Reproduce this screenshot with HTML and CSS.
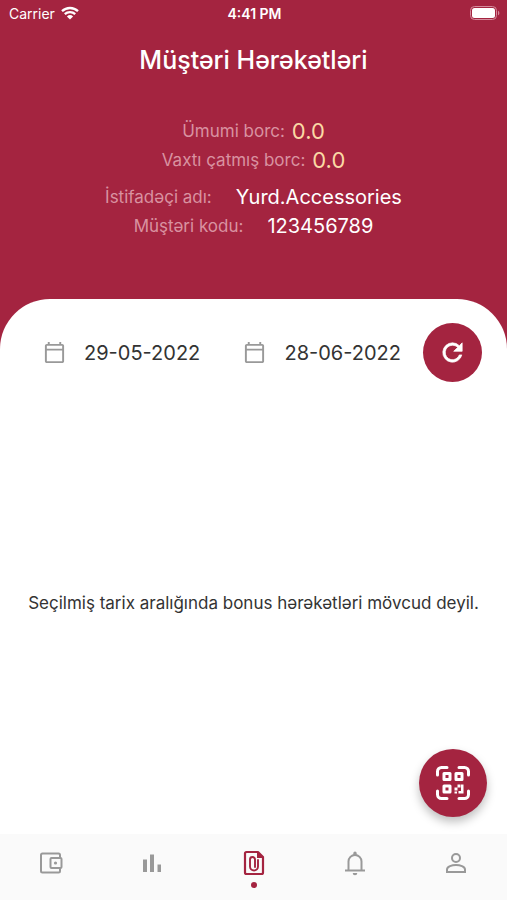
FILE: index.html
```
<!DOCTYPE html>
<html lang="az">
  <head>
    <meta charset="UTF-8"/>
    <meta name="viewport" content="width=device-width, initial-scale=1"/>
    <title>Müştəri Hərəkətləri</title>
    <link rel="stylesheet" href="styles.css">
  </head>
  <body>
    <div class="app">
      <div class="statusbar">
        <div class="carrier">
          <span>Carrier</span>
          <svg class="wifi" viewBox="0 0 18 14" aria-hidden="true">
            <path d="M1 5.2a11.6 11.6 0 0 1 16 0M3.8 8.2a7.5 7.5 0 0 1 10.4 0" fill="none" stroke="currentColor" stroke-width="2.3"/>
            <path d="M9 13.5 5.9 10.4a4.5 4.5 0 0 1 6.2 0z" fill="currentColor"/>
          </svg>
        </div>
        <div class="clock">4:41 PM</div>
        <svg class="battery" viewBox="0 0 30 14" aria-hidden="true">
          <rect x=".5" y=".5" width="26" height="13" rx="4" fill="none" stroke="#d58a9c"/>
          <rect x="2" y="2" width="23" height="10" rx="2.5" fill="#fff"/>
          <path d="M28 4.7c1.8.7 1.8 3.9 0 4.6z" fill="#d58a9c"/>
        </svg>
      </div>

      <header class="header">
        <h1>Müştəri Hərəkətləri</h1>
        <dl class="debts">
          <div class="row"><dt>Ümumi borc:</dt><dd>0.0</dd></div>
          <div class="row"><dt>Vaxtı çatmış borc:</dt><dd>0.0</dd></div>
        </dl>
        <dl class="account">
          <div class="row"><dt>İstifadəçi adı:</dt><dd>Yurd.Accessories</dd></div>
          <div class="row"><dt>Müştəri kodu:</dt><dd>123456789</dd></div>
        </dl>
      </header>

      <main class="sheet">
        <div class="filters">
          <button type="button" class="date">
            <svg viewBox="0 0 24 24" aria-hidden="true"><path fill="currentColor" d="M20 3h-1V1h-2v2H7V1H5v2H4c-1.100 0-2 .9-2 2v16c0 1.100.9 2 2 2h16c1.100 0 2-.9 2-2V5c0-1.100-.9-2-2-2zm0 18H4V10h16zm0-13H4V5h16z"/></svg>
            <span>29-05-2022</span>
          </button>
          <button type="button" class="date">
            <svg viewBox="0 0 24 24" aria-hidden="true"><path fill="currentColor" d="M20 3h-1V1h-2v2H7V1H5v2H4c-1.100 0-2 .9-2 2v16c0 1.100.9 2 2 2h16c1.100 0 2-.9 2-2V5c0-1.100-.9-2-2-2zm0 18H4V10h16zm0-13H4V5h16z"/></svg>
            <span>28-06-2022</span>
          </button>
          <button type="button" class="refresh" aria-label="Yenilə">
            <svg viewBox="0 0 24 24" aria-hidden="true"><path fill="currentColor" stroke="currentColor" stroke-width=".6" d="M17.650 6.350A7.960 7.960 0 0 0 12 4a8 8 0 1 0 7.730 10h-2.080A6 6 0 1 1 12 6c1.660 0 3.140.690 4.220 1.780L13 11h7V4z"/></svg>
          </button>
        </div>

        <p class="empty">Seçilmiş tarix aralığında bonus hərəkətləri mövcud deyil.</p>

        <button type="button" class="scan" aria-label="QR kod">
          <svg viewBox="0 0 36 36" aria-hidden="true">
            <g fill="none" stroke="currentColor" stroke-width="3" stroke-linecap="round">
              <path d="M2.500 10V6.500a4 4 0 0 1 4-4H12M24 2.500h5.500a4 4 0 0 1 4 4V10M33.500 26v3.500a4 4 0 0 1-4 4H24M12 33.500H6.500a4 4 0 0 1-4-4V26"/>
              <g stroke-linejoin="round">
                <rect x="9" y="8.500" width="6" height="6"/>
                <rect x="21" y="8.500" width="6" height="6"/>
                <rect x="9" y="21" width="6" height="6"/>
              </g>
            </g>
            <path fill="currentColor" d="M19.500 22.500h3v-3h3v3h-3v3h-3zM26 19.500h2.500v9h-5V26H26zM19.500 26.500h2.500v2h-2.500z"/>
          </svg>
        </button>
      </main>

      <nav class="tabs">
        <a href="#wallet" aria-label="Balans">
          <svg viewBox="0 0 24 24" aria-hidden="true" fill="none" stroke="currentColor" stroke-width="2" stroke-linejoin="round">
            <path d="M21 7V4a1.500 1.500 0 0 0-1.500-1.500h-16A1.500 1.500 0 0 0 2 4v16a1.500 1.500 0 0 0 1.500 1.500h16A1.500 1.500 0 0 0 21 20v-3"/>
            <rect x="11.500" y="7" width="11" height="10" rx="1"/>
            <circle cx="16.500" cy="12" r="1.600" fill="currentColor" stroke="none"/>
          </svg>
        </a>
        <a href="#stats" aria-label="Statistika">
          <svg viewBox="0 0 24 24" aria-hidden="true"><path fill="currentColor" d="M3 8.500h4V21H3zM10 3.500h4V21h-4zM17.500 13.500h3.500V21h-3.500z"/></svg>
        </a>
        <a href="#documents" class="active" aria-label="Hərəkətlər" aria-current="page">
          <svg viewBox="0 0 24 26" aria-hidden="true" fill="none" stroke="currentColor" stroke-width="2.200">
            <path d="M16 2H4.500A1.500 1.500 0 0 0 3 3.500v19A1.500 1.500 0 0 0 4.500 24h15a1.500 1.500 0 0 0 1.500-1.500V7z" stroke-linejoin="round"/>
            <path d="M15 1.500V8h6.500z" fill="currentColor" stroke="none"/>
            <path d="M16 10v6.500a4 4 0 0 1-8 0v-7a2.500 2.500 0 0 1 5 0V17" stroke-width="1.900" stroke-linecap="round"/>
          </svg>
        </a>
        <a href="#notifications" aria-label="Bildirişlər">
          <svg viewBox="0 0 24 26" aria-hidden="true">
            <path d="M5.500 20v-8.500a6.500 6.500 0 0 1 13 0V20M2 20.500h20" fill="none" stroke="currentColor" stroke-width="2"/>
            <path d="M10.300 5V3.200a1.700 1.700 0 0 1 3.400 0V5zM9.700 23h4.600a2.300 2.300 0 0 1-4.600 0z" fill="currentColor"/>
          </svg>
        </a>
        <a href="#profile" aria-label="Profil">
          <svg viewBox="0 0 24 24" aria-hidden="true" fill="none" stroke="currentColor" stroke-width="2">
            <circle cx="12" cy="7" r="4"/>
            <path d="M3 21v-2.500c0-3 5-4.500 9-4.500s9 1.500 9 4.500V21z"/>
          </svg>
        </a>
      </nav>
    </div>
  </body>
</html>
```

FILE: styles.css
```
* { box-sizing: border-box; }
html, body { margin: 0; padding: 0; }
body {
    font-family: Inter, "Liberation Sans", sans-serif;
    color: #333;
    background: #a42440;
}
button {
    margin: 0;
    padding: 0;
    border: 0;
    background: none;
    color: inherit;
    font: inherit;
    cursor: pointer;
}
svg { display: block; }

.app {
    display: flex;
    flex-direction: column;
    min-height: 100vh;
}

/* status bar */
.statusbar {
    display: grid;
    grid-template-columns: 1fr auto 1fr;
    align-items: center;
    height: 26px;
    padding: 0 7px 0 9px;
    color: #fff;
    font-size: 14px;
}
.carrier {
    display: flex;
    align-items: center;
    gap: 6px;
}
.wifi { width: 18px; height: 14px; }
.clock { font-weight: 600; }
.battery {
    width: 30px;
    height: 14px;
    justify-self: end;
}

/* header */
.header {
    padding: 18px 16px 58px;
    color: #fff;
    text-align: center;
}
.header h1 {
    margin: 0 0 41px;
    font-size: 25px;
    line-height: 32px;
    font-weight: 500;
}
.header dl { margin: 0; }
.row {
    display: flex;
    justify-content: center;
    align-items: center;
    line-height: 29px;
}
.row dt {
    color: #d992a0;
    font-size: 17px;
}
.row dd { margin: 0; }
.debts .row { gap: 7px; }
.debts dd {
    color: #fbd9a5;
    font-size: 22px;
}
.header .account { margin-top: 8px; }
.account .row { gap: 24px; }
.account dd { font-size: 20px; }

/* white sheet */
.sheet {
    position: relative;
    flex: 1;
    display: flex;
    flex-direction: column;
    padding: 24px 25px 11px 43px;
    border-radius: 50px 50px 0 0;
    background: #fff;
}
.filters {
    display: grid;
    grid-template-columns: 1fr 1fr auto;
    align-items: center;
    column-gap: 22px;
}
.date {
    display: flex;
    align-items: center;
    gap: 18px;
    font-size: 20px;
}
.date + .date { justify-content: flex-end; }
.date svg {
    width: 23px;
    height: 23px;
    color: #999;
}
.refresh {
    display: flex;
    justify-content: center;
    align-items: center;
    width: 59px;
    height: 59px;
    border-radius: 50%;
    background: #a42440;
    color: #fff;
}
.refresh svg { width: 29px; height: 29px; }
.empty {
    margin: auto -18px auto -36px;
    text-align: center;
    font-size: 17px;
    line-height: 24px;
}
.scan {
    position: absolute;
    right: 20px;
    bottom: 17px;
    display: flex;
    justify-content: center;
    align-items: center;
    width: 68px;
    height: 68px;
    border-radius: 50%;
    background: #a42440;
    color: #fff;
    box-shadow: 0 5px 10px rgba(0, 0, 0, .25);
}
.scan svg { width: 36px; height: 36px; }

/* bottom tabs */
.tabs {
    display: flex;
    height: 66px;
    background: #fafafa;
}
.tabs a {
    flex: 1;
    display: flex;
    flex-direction: column;
    align-items: center;
    padding-top: 16px;
    color: #999;
}
.tabs svg { width: 24px; height: 26px; }
.tabs .active { color: #a42440; }
.tabs .active::after {
    content: "";
    width: 6px;
    height: 6px;
    margin-top: 6px;
    border-radius: 50%;
    background: #a42440;
}
```
